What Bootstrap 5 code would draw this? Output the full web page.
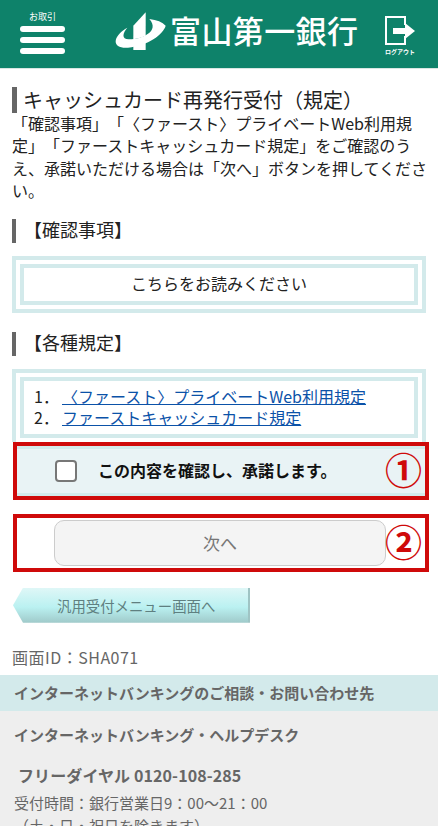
<!DOCTYPE html>
<html lang="ja">
<head>
  <meta charset="UTF-8" />
  <meta name="viewport" content="width=device-width, initial-scale=1" />
  <title>キャッシュカード再発行受付（規定）</title>
  <link href="https://cdn.jsdelivr.net/npm/bootstrap@5.3.0/dist/css/bootstrap.min.css" rel="stylesheet" />
  <style>
    html, body {
      overflow: hidden;
    }
    body {
      font-family: "Noto Sans CJK JP", "Liberation Sans", sans-serif;
      font-size: 16px;
      line-height: 21px;
      color: #222;
      background: #fff;
      text-spacing-trim: space-all;
    }
    .app-header {
      height: 69px;
      background: #0e826a;
      border-bottom: 1px solid #d9e6e2;
      color: #fff;
    }
    .menu-btn {
      width: 45px;
      margin-left: 20px;
      margin-top: 11px;
    }
    .menu-cap {
      font-size: 9px;
      line-height: 11px;
      margin-bottom: 4px;
    }
    .menu-bar {
      height: 6px;
      border-radius: 3px;
      background: #fff;
      margin-bottom: 5px;
    }
    .bank-logo {
      margin-left: 49px;
      margin-top: 9px;
    }
    .bank-name {
      font-size: 31px;
      line-height: 40px;
      letter-spacing: .4px;
      font-weight: 500;
      margin-left: 4px;
      white-space: nowrap;
    }
    .logout-btn {
      width: 36px;
      margin-left: auto;
      margin-right: 20px;
      margin-top: 16px;
      text-align: center;
    }
    .logout-cap {
      font-size: 6px;
      line-height: 8px;
      font-weight: 700;
      white-space: nowrap;
      margin-top: 2px;
    }
    .page-title {
      margin: 18px 12px 0;
      padding-left: 6px;
      border-left: 5px solid #666;
      font-size: 20px;
      line-height: 25px;
      padding-bottom: 1px;
      font-weight: 400;
    }
    .intro-text {
      margin: -1px 9px 0 12px;
      font-size: 16px;
      line-height: 22.4px;
    }
    .sec-head {
      margin: 17px 12px 12.5px;
      padding-left: 8px;
      padding-bottom: 4.5px;
      border-left: 4px solid #666;
      font-size: 18px;
      line-height: 20px;
      font-weight: 400;
    }
    .sec-head-next {
      margin-top: 19px;
    }
    .double-box {
      margin: 0 12px;
      padding: 4px;
      border: 4px solid #d3eaeb;
    }
    .double-box-open {
      padding-bottom: 4px;
      border-bottom: 0;
    }
    .double-box-in {
      border: 4px solid #d3eaeb;
    }
    .read-link {
      height: 41px;
      line-height: 31px;
      text-align: center;
    }
    .rule-list {
      margin: 0;
      padding: 5px 0 6px 10px;
      list-style: none;
      line-height: 21px;
    }
    .rule-list a {
      color: #0b52a8;
    }
    .rule-num {
      display: inline-block;
      width: 28px;
    }
    .red-box {
      margin: 0 9px 0 13px;
      border: 4px solid #cf0a0a;
      position: relative;
    }
    .red-box-next {
      margin-top: 14px;
    }
    .agree-row {
      height: 50px;
      background: #e9f3f5;
      border-top: 3px solid #d3eaeb;
      border-bottom: 3px solid #d3eaeb;
      font-size: 16px;
      font-weight: 700;
      color: #111;
    }
    .agree-check {
      width: 22px;
      height: 22px;
      margin: 0 21px 0 38px;
      background: #fff;
      border: 2px solid #777;
      border-radius: 4px;
      flex: none;
    }
    .next-row {
      height: 50px;
    }
    .next-btn {
      display: block;
      width: 332px;
      height: 46px;
      margin: 0 0 0 37px;
      background: #f4f4f4;
      border: 1px solid #ccc;
      border-radius: 10px;
      color: #777;
      font-size: 17px;
    }
    .circle-num {
      position: absolute;
      right: 3px;
      top: 50%;
      transform: translateY(-55%);
      font-size: 37px;
      line-height: 1;
      color: #cf0a0a;
      font-weight: 700;
    }
    .back-btn {
      display: block;
      width: 237px;
      height: 35px;
      margin: 16px 0 0 13px;
      line-height: 35px;
      padding-left: 44px;
      font-size: 14.4px;
      color: #5f7f80;
      text-decoration: none;
      border-right: 2px solid #9fc4c4;
      background: linear-gradient(#dff7f7, #baf1f1 55%, #9fc9c9);
      clip-path: polygon(10px 0, 100% 0, 100% 100%, 10px 100%, 0 50%);
    }
    .screen-id {
      margin: 23px 12px 0;
      color: #666;
      font-size: 16px;
      line-height: 22px;
      padding-bottom: 2px;
      letter-spacing: .5px;
    }
    .help-head {
      height: 36px;
      margin-top: 5px;
      line-height: 36px;
      padding-left: 14px;
      background: #d3eaeb;
      color: #666;
      font-size: 15px;
      font-weight: 700;
    }
    .help-body {
      background: #eee;
      color: #666;
      padding: 0 14px;
      height: 200px;
      font-size: 15px;
    }
    .help-name {
      font-weight: 700;
      padding-top: 12px;
      line-height: 24px;
    }
    .help-tel {
      font-weight: 700;
      padding: 16px 0 0 4px;
      line-height: 24px;
      font-size: 16px;
      letter-spacing: .1px;
    }
    .help-time {
      line-height: 23px;
      margin-top: 4px;
    }
  </style>
</head>
<body>
  <!-- Header -->
  <header class="app-header d-flex">
    <div class="menu-btn text-center">
      <div class="menu-cap">お取引</div>
      <div class="menu-bar"></div>
      <div class="menu-bar"></div>
      <div class="menu-bar"></div>
    </div>
    <div class="bank-logo d-flex align-items-center align-self-start">
      <svg width="52" height="42" viewBox="10 12 156 126" aria-hidden="true">
        <path fill="#fff" d="M105 22 V93 Q86 100 68 103 V62 Z" />
        <path fill="#fff" d="M68 120 Q88 117 105 110 V135 L68 135 Z" />
        <path fill="#fff" d="M116 42 Q150 46 165 62 C158 88 112 122 52 128 C28 130 14 122 15 108 C17 92 32 78 50 68 C36 84 32 102 54 103 C90 104 150 80 116 42 Z" />
      </svg>
      <div class="bank-name">富山第一銀行</div>
    </div>
    <div class="logout-btn">
      <svg width="32" height="30" viewBox="0 0 32 30" aria-hidden="true">
        <path fill="none" stroke="#fff" stroke-width="2" d="M21 9 V1 H2 V28 H21 V20" />
        <path fill="#fff" d="M9 12 H21 V7 L31 15 L21 23 V18 H9 Z" />
      </svg>
      <div class="logout-cap">ログアウト</div>
    </div>
  </header>

  <h1 class="page-title">キャッシュカード再発行受付（規定）</h1>
  <p class="intro-text">「確認事項」「〈ファースト〉プライベートWeb利用規定」「ファーストキャッシュカード規定」をご確認のうえ、承諾いただける場合は「次へ」ボタンを押してください。</p>

  <h2 class="sec-head">【確認事項】</h2>
  <div class="double-box">
    <div class="double-box-in read-link">こちらをお読みください</div>
  </div>

  <h2 class="sec-head sec-head-next">【各種規定】</h2>
  <div class="double-box double-box-open">
    <div class="double-box-in">
      <ol class="rule-list">
        <li><span class="rule-num">1．</span><a href="#">〈ファースト〉プライベートWeb利用規定</a></li>
        <li><span class="rule-num">2．</span><a href="#">ファーストキャッシュカード規定</a></li>
      </ol>
    </div>
  </div>

  <div class="red-box">
    <div class="agree-row d-flex align-items-center">
      <span class="agree-check"></span>
      <span>この内容を確認し、承諾します。</span>
    </div>
    <span class="circle-num">①</span>
  </div>

  <div class="red-box red-box-next">
    <div class="next-row d-flex align-items-center">
      <button type="button" class="next-btn" disabled>次へ</button>
    </div>
    <span class="circle-num">②</span>
  </div>

  <a href="#" class="back-btn">汎用受付メニュー画面へ</a>

  <div class="screen-id">画面ID：SHA071</div>

  <div class="help-head">インターネットバンキングのご相談・お問い合わせ先</div>
  <div class="help-body">
    <div class="help-name">インターネットバンキング・ヘルプデスク</div>
    <div class="help-tel">フリーダイヤル 0120-108-285</div>
    <div class="help-time">受付時間：銀行営業日9：00～21：00<br />（土・日・祝日を除きます）</div>
  </div>

  <script src="https://cdn.jsdelivr.net/npm/bootstrap@5.3.0/dist/js/bootstrap.bundle.min.js"></script>
</body>
</html>
